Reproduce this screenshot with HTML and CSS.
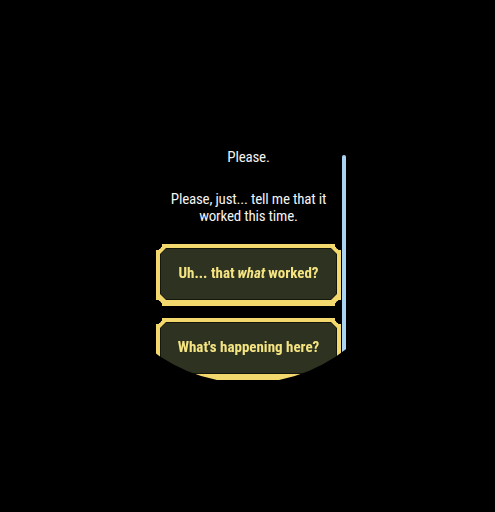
FILE: index.html
```html
<!DOCTYPE html>
<html>
<head>
<meta charset="utf-8">
<link rel="stylesheet" href="styles.css">
</head>
<body>
<div class="screen">
  <div class="content">
    <p class="msg">Please.</p>
    <p class="msg msg-long">Please, just... tell me that it worked this time.</p>
    <div class="choices">
      <button class="choice"><span class="rim"><span class="face">Uh... that <em>what</em> worked?</span></span></button>
      <button class="choice"><span class="rim"><span class="face">What's happening here?</span></span></button>
    </div>
  </div>
  <div class="scrollbar"></div>
</div>
</body>
</html>
```
FILE: styles.css
```css
html, body {
  margin: 0;
  padding: 0;
  background: #000;
}
.screen {
  position: relative;
  width: 495px;
  height: 512px;
  background: #000;
  clip-path: circle(159px at 248px 224px);
  overflow: hidden;
}
.content {
  width: 185px;
  margin-left: 156px;
  padding-top: 149px;
  display: flex;
  flex-direction: column;
  align-items: center;
  font-family: "Roboto Condensed", Roboto, sans-serif;
  font-stretch: 80%;
}
.msg {
  margin: 0;
  color: #f2f2f2;
  font-size: 15px;
  line-height: 17px;
  text-align: center;
  letter-spacing: -0.2px;
}
.msg-long {
  margin-top: 25px;
  width: 180px;
}
.choices {
  margin-top: 19px;
  width: 185px;
  display: flex;
  flex-direction: column;
  gap: 12px;
}
.choice {
  display: block;
  width: 185px;
  height: 62px;
  border: 0;
  margin: 0;
  padding: 4px 4px 6px 4px;
  background: #f3d86e;
  -webkit-mask:
    radial-gradient(circle at 0 0, #0000 6px, #000 6.5px) top left / 94px 32px no-repeat,
    radial-gradient(circle at 100% 0, #0000 6px, #000 6.5px) top right / 94px 32px no-repeat,
    radial-gradient(circle at 0 100%, #0000 6px, #000 6.5px) bottom left / 94px 32px no-repeat,
    radial-gradient(circle at 100% 100%, #0000 6px, #000 6.5px) bottom right / 94px 32px no-repeat;
  mask:
    radial-gradient(circle at 0 0, #0000 6px, #000 6.5px) top left / 94px 32px no-repeat,
    radial-gradient(circle at 100% 0, #0000 6px, #000 6.5px) top right / 94px 32px no-repeat,
    radial-gradient(circle at 0 100%, #0000 6px, #000 6.5px) bottom left / 94px 32px no-repeat,
    radial-gradient(circle at 100% 100%, #0000 6px, #000 6.5px) bottom right / 94px 32px no-repeat;
  font-family: inherit;
  cursor: pointer;
}
.rim {
  display: block;
  height: 100%;
  padding: 1px;
  background: #15170c;
  clip-path: polygon(6px 0, calc(100% - 6px) 0, 100% 6px, 100% calc(100% - 6px), calc(100% - 6px) 100%, 6px 100%, 0 calc(100% - 6px), 0 6px);
  box-sizing: border-box;
}
.face {
  display: flex;
  align-items: center;
  justify-content: center;
  height: 100%;
  padding-bottom: 2px;
  box-sizing: border-box;
  background: #2d3221;
  clip-path: polygon(5px 0, calc(100% - 5px) 0, 100% 5px, 100% calc(100% - 5px), calc(100% - 5px) 100%, 5px 100%, 0 calc(100% - 5px), 0 5px);
  color: #f5e482;
  font-size: 15px;
  font-weight: 700;
  font-stretch: 84%;
  letter-spacing: 0;
}
.face em {
  font-style: italic;
  margin: 0 3px;
}
.scrollbar {
  position: absolute;
  left: 342px;
  top: 155px;
  width: 4px;
  height: 230px;
  border-radius: 2px;
  background: #a9d3f3;
}
```
